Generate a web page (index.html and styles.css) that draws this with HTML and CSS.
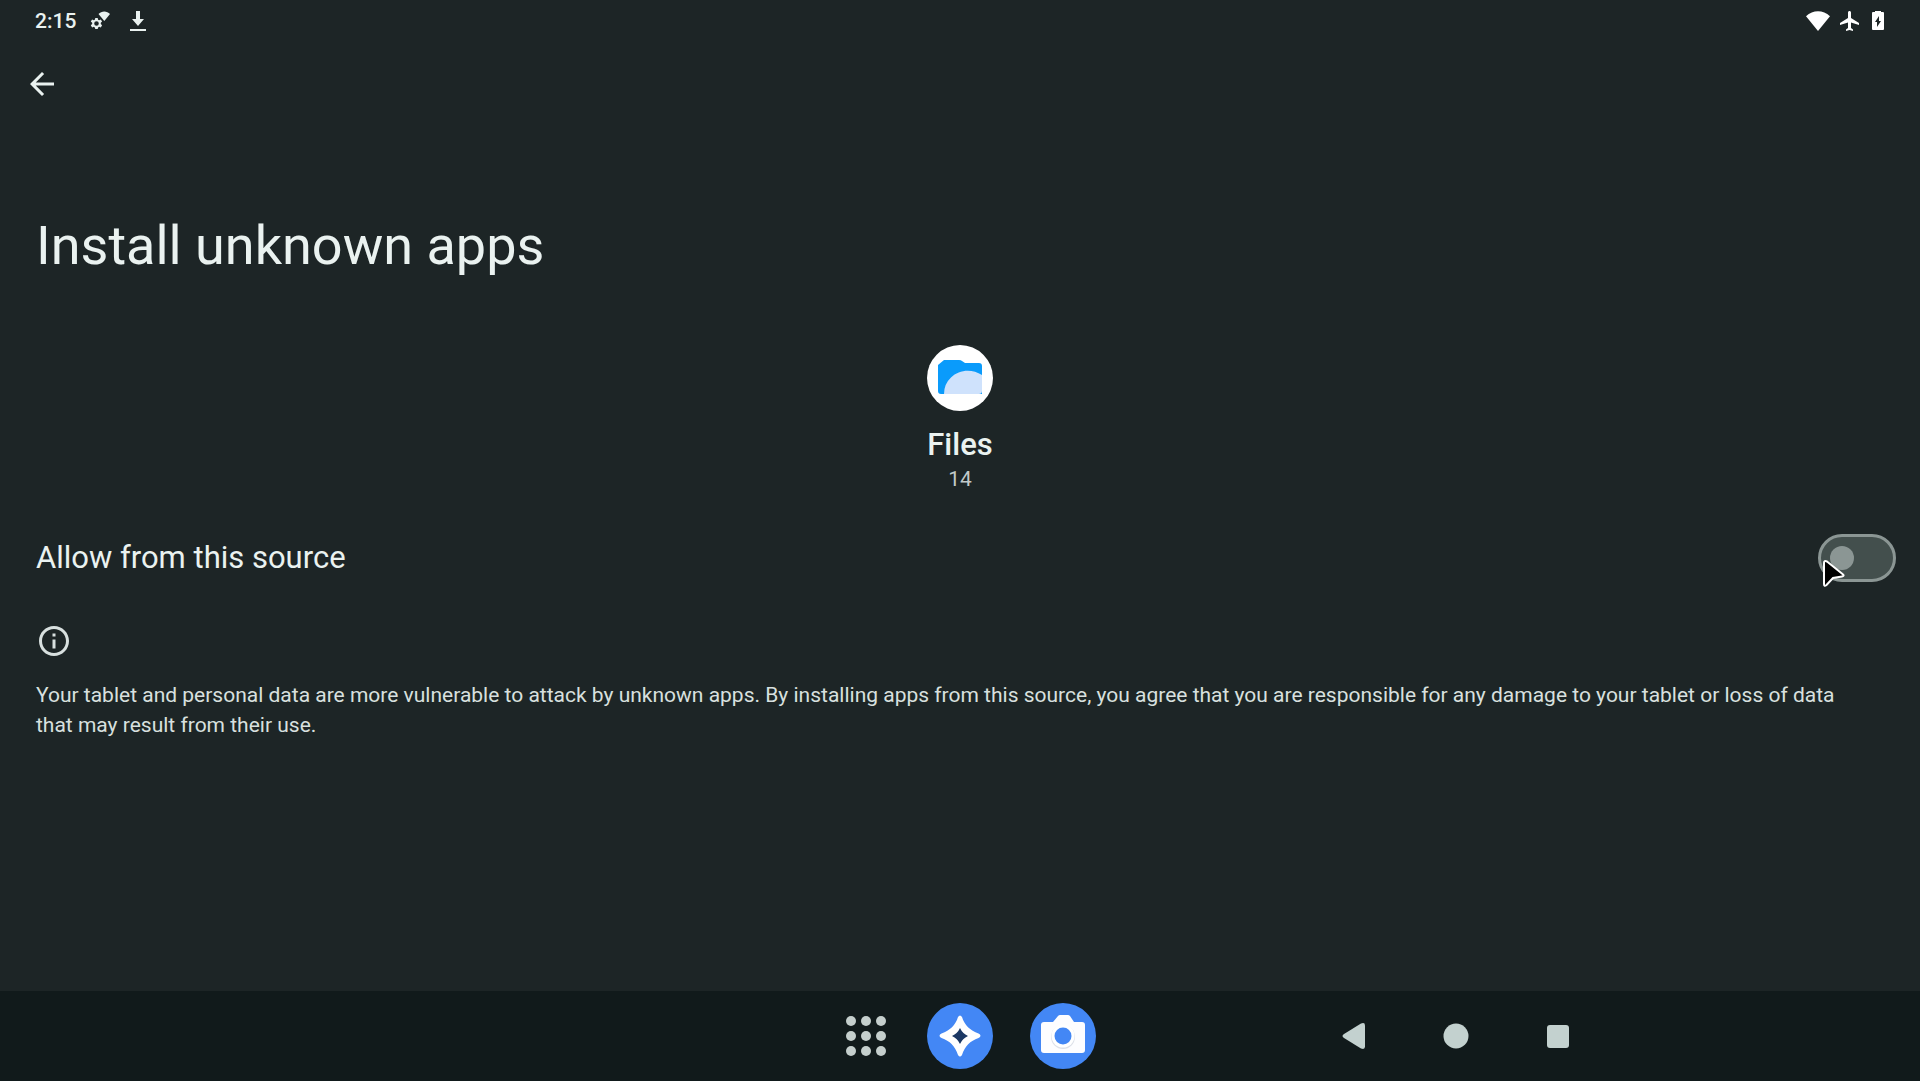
FILE: index.html
```html
<!DOCTYPE html>
<html lang="en">
<head>
<meta charset="utf-8">
<title>Install unknown apps</title>
<link rel="stylesheet" href="styles.css">
</head>
<body>
<div class="screen">
  <header class="status">
    <div class="status-left">
      <time class="clock">2:15</time>
      <svg class="status-gear" viewBox="0 0 20 20" aria-hidden="true">
        <path fill-rule="evenodd" d="M5.300 7h2.400l.4 1.700 1 .5 1.700-.7 1.300 2-1.300 1.300v1.300l1.300 1.200-1.300 2.100-1.600-.6-1.100.6-.4 1.600H5.300l-.5-1.600-1-.6-1.700.6L.8 14.300l1.400-1.200v-1.300L.8 10.500l1.300-2 1.700.7 1-.5zM6.500 10.200a2.300 2.300 0 1 0 0 4.600a2.300 2.300 0 1 0 0-4.600z"/>
        <path d="M8.500 3c3-3.500 8.500-3.500 11.500 0l-5.700 7z"/>
      </svg>
      <svg class="status-download" viewBox="0 0 16 20" aria-hidden="true">
        <path d="M6 0h4v8h4l-6 7-6-7h4zM0 18h16v2H0z"/>
      </svg>
    </div>
    <div class="status-right">
      <svg class="status-wifi" viewBox="0 0 24 20" aria-hidden="true"><path d="M12 20L0 5.300C7-1.500 17-1.500 24 5.300z"/></svg>
      <svg class="status-plane" viewBox="2 2 20 20" aria-hidden="true"><path d="M21 16v-2l-8-5V3.500C13 2.670 12.330 2 11.500 2S10 2.670 10 3.500V9l-8 5v2l8-2.500V19l-2 1.500V22l3.500-1 3.500 1v-1.500L13 19v-5.500z"/></svg>
      <svg class="status-battery" viewBox="0 0 12 20" aria-hidden="true"><path fill-rule="evenodd" d="M3 0h6v1h2q1 0 1 1v16q0 1-1 1H1q-1 0-1-1V2q0-1 1-1h2zM7 5L3 11h2v5l4-6H7z"/></svg>
    </div>
  </header>

  <main class="content">
    <button class="back" type="button" aria-label="Navigate up">
      <svg viewBox="0 0 24 24" aria-hidden="true"><path d="M20 11H7.830l5.590-5.590L12 4l-8 8 8 8 1.410-1.410L7.830 13H20z"/></svg>
    </button>
    <h1 class="title">Install unknown apps</h1>

    <section class="app">
      <svg class="app-icon" viewBox="0 0 66 66" aria-hidden="true">
        <circle cx="33" cy="33" r="33" fill="#fff"/>
        <path d="M11 20l6-5h15q2 0 3 1l3 2h14q3 0 3 3v28H14q-3 0-3-3z" fill="#0a9bfb"/>
        <path d="M17 49q0-10 7-16.500c8-8 21-9 31-2.500v16q0 3-3 3z" fill="#cfe2fc"/>
      </svg>
      <h2 class="app-name">Files</h2>
      <p class="app-version">14</p>
    </section>

    <label class="setting">
      <span class="setting-label">Allow from this source</span>
      <span class="switch-box">
        <input class="switch" type="checkbox" role="switch">
        <svg class="pointer" viewBox="0 0 26 30" aria-hidden="true"><path d="M3 4v21q0 3 2.500 1l6.500-7 9-1.500q3-.5.500-2.500L6 2.500Q3 1 3 4z"/></svg>
      </span>
    </label>

    <section class="notice">
      <svg class="notice-icon" viewBox="0 0 24 24" aria-hidden="true"><path d="M11 7h2v2h-2zm0 4h2v6h-2zm1-9C6.480 2 2 6.480 2 12s4.480 10 10 10 10-4.480 10-10S17.520 2 12 2zm0 18c-4.410 0-8-3.590-8-8s3.590-8 8-8 8 3.590 8 8-3.590 8-8 8z"/></svg>
      <p class="notice-text">Your tablet and personal data are more vulnerable to attack by unknown apps. By installing apps from this source, you agree that you are responsible for any damage to your tablet or loss of data that may result from their use.</p>
    </section>
  </main>

  <nav class="taskbar" aria-label="Taskbar">
    <div class="taskbar-start">
      <button class="launcher" type="button" aria-label="All apps">
        <svg viewBox="0 0 40 40" aria-hidden="true">
          <circle cx="5" cy="5" r="5"/><circle cx="20" cy="5" r="5"/><circle cx="35" cy="5" r="5"/>
          <circle cx="5" cy="20" r="5"/><circle cx="20" cy="20" r="5"/><circle cx="35" cy="20" r="5"/>
          <circle cx="5" cy="35" r="5"/><circle cx="20" cy="35" r="5"/><circle cx="35" cy="35" r="5"/>
        </svg>
      </button>
    </div>
    <button class="dock-app" type="button" aria-label="Gallery">
      <svg viewBox="0 0 66 66" aria-hidden="true">
        <circle cx="33" cy="33" r="33" fill="#4387f5"/>
        <path d="M31 14q2-3 4 0c2.500 8 8 13.500 16.500 16.500q4 2 0 4.500c-8.500 3-13.500 8-16.500 17q-2 3-4 0c-3-9-8-14-16.500-17q-4-2.500 0-4.500C23 27.500 28.500 22 31 14z" fill="#fff"/>
        <path d="M33 25q2.500 5.500 8 8q-5.500 2.500-8 8q-2.500-5.500-8-8q5.500-2.500 8-8z" fill="#1c3864"/>
      </svg>
    </button>
    <div class="taskbar-end">
      <button class="dock-app" type="button" aria-label="Camera">
        <svg viewBox="0 0 66 66" aria-hidden="true">
          <circle cx="33" cy="33" r="33" fill="#4387f5"/>
          <path d="M14 19h9l5-6q1-1 2-1h8q1 0 2 1l4 6h8q3 0 3 3v25q0 3-3 3H14q-3 0-3-3V22q0-3 3-3z" fill="#fdfdff"/>
          <circle cx="33" cy="34" r="12" fill="#dde1e9"/>
          <circle cx="33" cy="33" r="11.500" fill="#fff"/>
          <circle cx="33" cy="33" r="8.500" fill="#4387f5"/>
        </svg>
      </button>
      <div class="nav-keys">
        <button class="nav-key" type="button" aria-label="Back"><svg viewBox="0 0 26 26" aria-hidden="true"><path d="M3 11L20 .500q4-1.500 4 2v21q0 3.500-4 2L3 15q-3-2 0-4z"/></svg></button>
        <button class="nav-key" type="button" aria-label="Home"><svg viewBox="0 0 26 26" aria-hidden="true"><circle cx="13" cy="13" r="12.500"/></svg></button>
        <button class="nav-key" type="button" aria-label="Recent apps"><svg viewBox="0 0 26 26" aria-hidden="true"><rect x="2" y="2" width="22" height="23" rx="3"/></svg></button>
      </div>
    </div>
  </nav>
</div>
</body>
</html>
```
FILE: styles.css
```css
* { box-sizing: border-box; }

body {
  margin: 0;
  background: #1d2526;
  color: #eaf2f0;
  font-family: Roboto, sans-serif;
}

button {
  display: flex;
  padding: 0;
  border: 0;
  background: none;
  color: inherit;
}

svg { display: block; fill: currentColor; }

h1, h2, p { margin: 0; font-weight: 400; }

.screen {
  display: flex;
  flex-direction: column;
  min-height: 100vh;
}

/* Status bar */
.status {
  display: flex;
  justify-content: space-between;
  align-items: center;
  height: 42px;
  padding: 0 36px 0 35px;
}

.status-left { display: flex; align-items: center; }
.status-right { display: flex; align-items: center; gap: 10px; color: #fff; }

.clock { font-size: 21px; font-weight: 500; line-height: 24px; }

.status-gear { width: 20px; height: 20px; margin-left: 14px; }
.status-download { width: 16px; height: 20px; margin-left: 20px; }
.status-wifi { width: 24px; height: 20px; }
.status-plane { width: 20px; height: 20px; }
.status-battery { width: 12px; height: 20px; margin-left: 2px; }

/* Page */
.content { flex: 1; }

.back { margin: 24px 0 0 24px; }
.back svg { width: 36px; height: 36px; }

.title {
  margin: 112px 36px 0;
  font-size: 54px;
  line-height: 64px;
}

.app {
  display: flex;
  flex-direction: column;
  align-items: center;
  margin-top: 67px;
}

.app-icon { width: 66px; height: 66px; }

.app-name {
  margin-top: 16px;
  font-size: 31px;
  font-weight: 500;
  line-height: 36px;
}

.app-version {
  margin-top: 4px;
  color: #c2cac9;
  font-size: 21px;
  line-height: 24px;
}

.setting {
  display: flex;
  justify-content: space-between;
  align-items: center;
  margin-top: 43px;
  padding: 0 24px 0 36px;
}

.setting-label { font-size: 31px; line-height: 36px; }

.switch-box { position: relative; display: flex; }

.switch {
  appearance: none;
  display: flex;
  align-items: center;
  width: 78px;
  height: 48px;
  margin: 0;
  padding: 0 9px;
  border: 3px solid #8b9694;
  border-radius: 24px;
  background: #434f4d;
}

.switch::before {
  content: "";
  width: 24px;
  height: 24px;
  border-radius: 50%;
  background: #8b9694;
}

.switch:checked { justify-content: flex-end; }

/* Mouse pointer resting over the switch */
.pointer {
  position: absolute;
  top: 25px;
  left: 3px;
  width: 26px;
  height: 30px;
  fill: #000;
  stroke: #fff;
  stroke-width: 2px;
}

.notice {
  margin-top: 41px;
  padding: 0 48px 0 36px;
  color: #d8e0df;
}

.notice-icon { width: 36px; height: 36px; }

.notice-text {
  margin-top: 21px;
  font-size: 21px;
  line-height: 30px;
}

/* Taskbar */
.taskbar {
  display: grid;
  grid-template-columns: 1fr auto 1fr;
  align-items: center;
  height: 90px;
  background: #111a1b;
}

.taskbar-start { display: flex; justify-content: flex-end; padding-right: 41px; }
.launcher { color: #c5cfcd; }
.launcher svg { width: 40px; height: 40px; }
.dock-app svg { width: 66px; height: 66px; }

.taskbar-end {
  display: flex;
  justify-content: flex-start;
  align-items: center;
  gap: 245px;
  padding-left: 37px;
}

.nav-keys { display: flex; gap: 76px; color: #c3d1cf; }
.nav-key svg { width: 26px; height: 26px; }
```
